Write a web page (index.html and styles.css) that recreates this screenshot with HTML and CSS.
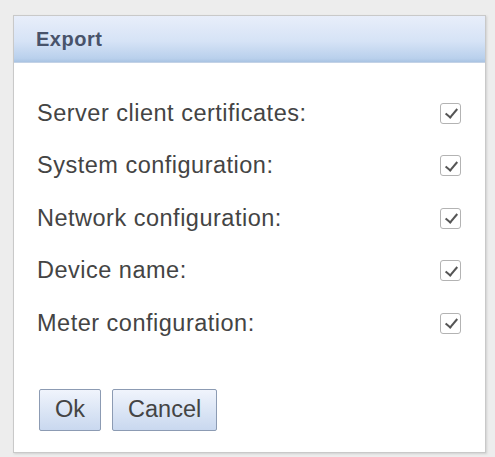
FILE: index.html
```html
<!DOCTYPE html>
<html>
<head>
  <meta charset="UTF-8">
  <title>Export</title>
  <link rel="stylesheet" href="styles.css">
</head>
<body>
  <div class="dialog">
    <div class="dialog-title">Export</div>
    <form class="dialog-body">
      <label class="row">Server client certificates: <input type="checkbox" checked></label>
      <label class="row">System configuration: <input type="checkbox" checked></label>
      <label class="row">Network configuration: <input type="checkbox" checked></label>
      <label class="row">Device name: <input type="checkbox" checked></label>
      <label class="row">Meter configuration: <input type="checkbox" checked></label>

      <div class="buttons">
        <button type="button">Ok</button>
        <button type="button">Cancel</button>
      </div>
    </form>
  </div>
</body>
</html>
```

FILE: styles.css
```css
body { margin: 0; padding: 15px 9px 4px 13px; background: #ededed; font-family: "Liberation Sans", Arial, sans-serif; }
.dialog { background: #fff; border: 1px solid #c9c9c9; box-shadow: 1px 1px 2px #d0d0d0; height: 438px; box-sizing: border-box; }
.dialog-title { height: 46px; line-height: 46px; padding-left: 22px; font-size: 20px; font-weight: bold; color: #48536a; letter-spacing: 0.5px;
  background: linear-gradient(#e8eefa, #d6e3f6 55%, #b9d0ec 92%, #a9c3e2); border-bottom: 1px solid #c3d2e6; }
.dialog-body { padding: 24px 24px 0 23px; }
.row { display: flex; justify-content: space-between; align-items: center; height: 52.5px; font-size: 23.5px; letter-spacing: 0.5px; color: #444; }
.row input { appearance: none; width: 21px; height: 21px; margin: 0; border: 1px solid #b3b3b3; border-radius: 3px; background: #fff; position: relative; }
.row input:checked::after { content: ""; position: absolute; left: 6.5px; top: 2.5px; width: 5px; height: 10px; border: solid #555; border-width: 0 2.5px 2.5px 0; transform: rotate(40deg); }
.buttons { margin-top: 39px; display: flex; gap: 11px; padding-left: 2px; }
button { height: 42px; padding: 0 15px; font-family: inherit; font-size: 23.5px; color: #444; border: 1px solid #8c9bb3; border-radius: 2px;
  background: linear-gradient(#f0f4fc, #d8e3f4 60%, #c9d8ef); }
```
